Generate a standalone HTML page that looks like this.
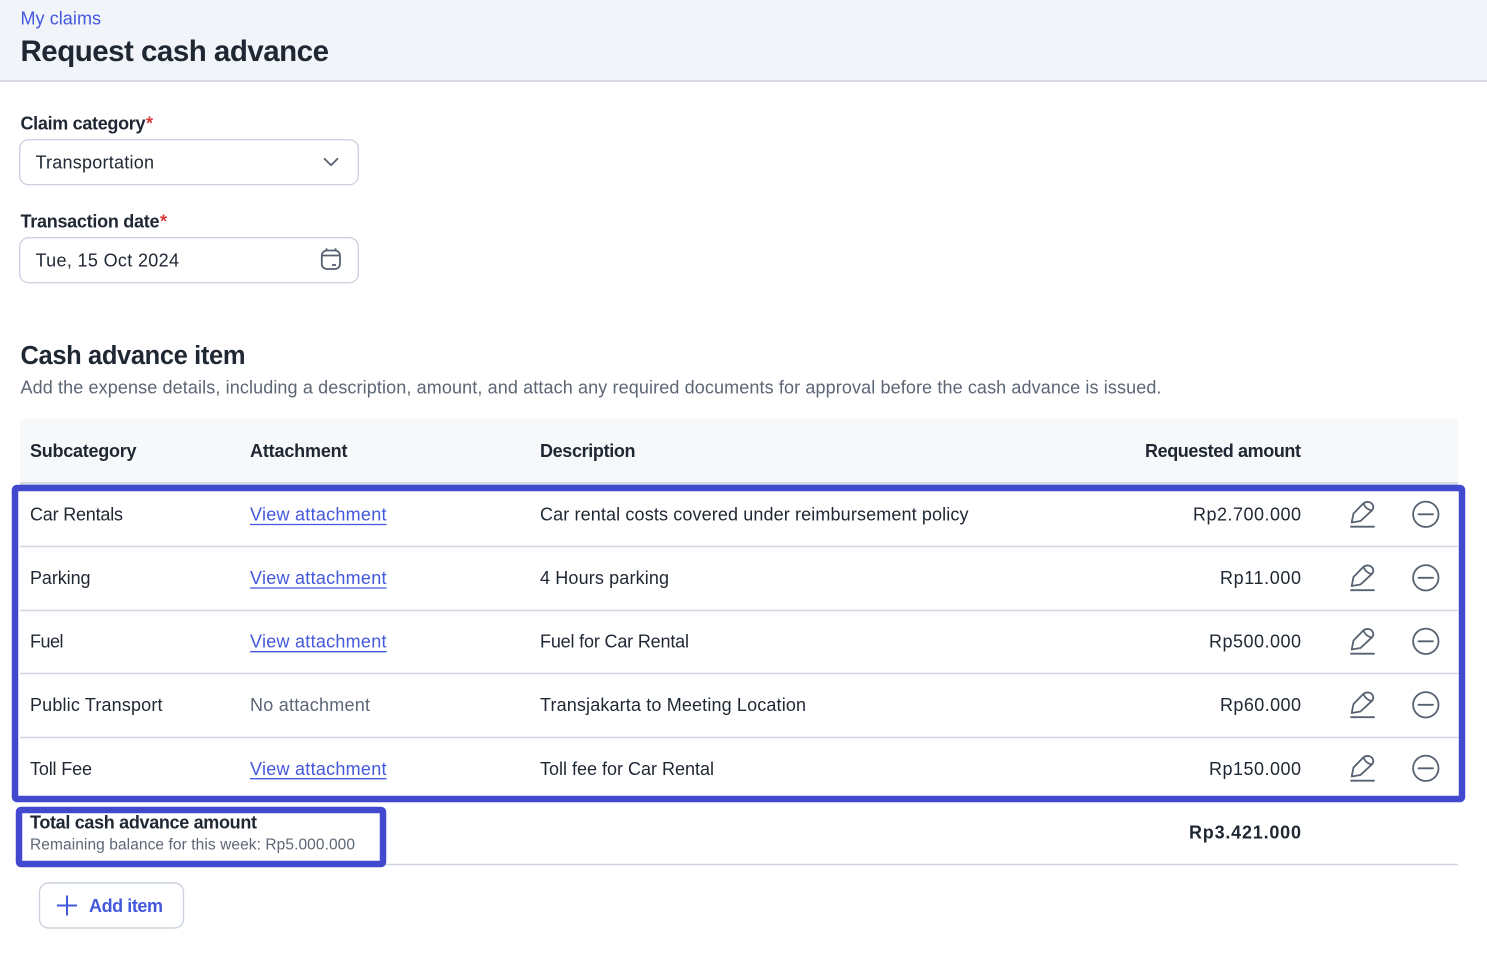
<!DOCTYPE html>
<html lang="en"><head><meta charset="utf-8"><title>Request cash advance</title>
<style>
html,body{margin:0;padding:0;background:#fff;width:1487px;height:956px;overflow:hidden}
svg{display:block}
text{font-family:"Liberation Sans",sans-serif;fill:#1f2733;font-size:18px}
.b{font-weight:700}
.l{fill:#4358dd}
.g{fill:#5c6675}
.ic{fill:none;stroke:#566171;stroke-width:1.800;stroke-linecap:round;stroke-linejoin:round}
</style></head><body>
<svg width="1487" height="956" viewBox="0 0 1487 956" xmlns="http://www.w3.org/2000/svg">
<defs>
<g id="pen" class="ic"><path d="M1351.700 522.500 L1353.500 513.500 L1363 503.800 Q1366 501.200 1369.500 502.200 Q1373 503.500 1373.300 507 Q1373.300 509 1372 510.300 L1360.500 521 Z"/><path d="M1363.800 504.500 Q1366.500 509.500 1371.800 510.500"/><path d="M1351 526.700 H1374"/></g>
<g id="minus" class="ic"><circle cx="1425.800" cy="514.300" r="12.700"/><path d="M1418.500 514.300 H1433"/></g>
</defs>
<rect width="1487" height="81" fill="#f1f4f9"/><rect y="80" width="1487" height="2" fill="#d6dbe3"/>
<text x="20.500" y="24.300" class="l" textLength="80.500">My claims</text>
<text x="20.500" y="61" class="b" style="font-size:29.500px" textLength="308.500">Request cash advance</text>

<text x="20.500" y="129.700" class="b" textLength="125">Claim category</text><text x="146" y="129.700" class="b" style="fill:#d93a3a">*</text>
<rect x="19.700" y="139.700" width="338.600" height="45" rx="9" fill="#fff" stroke="#ccd3df" stroke-width="1.400"/>
<text x="35.500" y="168.300" textLength="118.500">Transportation</text>
<path class="ic" d="M324.500 158.800 L331 165.300 L337.500 158.800"/>

<text x="20.500" y="227.500" class="b" textLength="139">Transaction date</text><text x="160" y="227.500" class="b" style="fill:#d93a3a">*</text>
<rect x="19.700" y="237.700" width="338.600" height="45" rx="9" fill="#fff" stroke="#ccd3df" stroke-width="1.400"/>
<text x="35.500" y="266.300" textLength="143.500">Tue, 15 Oct 2024</text>
<rect x="321.800" y="250.500" width="18.200" height="18.500" rx="5" class="ic"/><path class="ic" d="M326.500 249 V250.500 M335.500 249 V250.500 M323 255.500 H339"/><path d="M332 265 H336" stroke="#566171" stroke-width="1.800"/>

<text x="20.500" y="363.800" class="b" style="font-size:25.500px" textLength="225">Cash advance item</text>
<text x="20.500" y="393.500" class="g" textLength="1141">Add the expense details, including a description, amount, and attach any required documents for approval before the cash advance is issued.</text>

<rect x="20" y="419" width="1438" height="64" fill="#f7f8fa"/><rect x="20" y="482" width="1438" height="3" fill="#d6dbe3"/>
<text x="30" y="457" class="b" textLength="106.500">Subcategory</text>
<text x="250" y="457" class="b" textLength="97.500">Attachment</text>
<text x="540" y="457" class="b" textLength="95.500">Description</text>
<text x="1145" y="457" class="b" textLength="156">Requested amount</text>

<path d="M20 546.500H1458M20 610.500H1458M20 673.500H1458M20 737.500H1458M20 864.500H1458" stroke="#cfd6e1" stroke-width="1.500"/>

<text x="30" y="520.500" textLength="93">Car Rentals</text>
<text x="250" y="520.500" class="l" textLength="136.500">View attachment</text>
<text x="540" y="520.500" textLength="428.500">Car rental costs covered under reimbursement policy</text>
<text x="1193" y="520.500" textLength="108">Rp2.700.000</text>

<text x="30" y="584" textLength="60.500">Parking</text>
<text x="250" y="584" class="l" textLength="136.500">View attachment</text>
<text x="540" y="584" textLength="129">4 Hours parking</text>
<text x="1220" y="584" textLength="81">Rp11.000</text>

<text x="30" y="647.700" textLength="33.500">Fuel</text>
<text x="250" y="647.700" class="l" textLength="136.500">View attachment</text>
<text x="540" y="647.700" textLength="149">Fuel for Car Rental</text>
<text x="1209" y="647.700" textLength="92">Rp500.000</text>

<text x="30" y="711.200" textLength="132.500">Public Transport</text>
<text x="250" y="711.200" class="g" textLength="120">No attachment</text>
<text x="540" y="711.200" textLength="266">Transjakarta to Meeting Location</text>
<text x="1220" y="711.200" textLength="81">Rp60.000</text>

<text x="30" y="775" textLength="62">Toll Fee</text>
<text x="250" y="775" class="l" textLength="136.500">View attachment</text>
<text x="540" y="775" textLength="174">Toll fee for Car Rental</text>
<text x="1209" y="775" textLength="92">Rp150.000</text>

<path d="M250 524.500H386.500M250 588H386.500M250 651.700H386.500M250 778.700H386.500" stroke="#4358dd" stroke-width="1.300"/>

<use href="#pen"/><use href="#minus"/>
<use href="#pen" y="63.500"/><use href="#minus" y="63.500"/>
<use href="#pen" y="127"/><use href="#minus" y="127"/>
<use href="#pen" y="190.500"/><use href="#minus" y="190.500"/>
<use href="#pen" y="254"/><use href="#minus" y="254"/>

<text x="30" y="828.700" class="b" textLength="227">Total cash advance amount</text>
<text x="30" y="849.500" class="g" style="font-size:15.500px" textLength="325">Remaining balance for this week: Rp5.000.000</text>
<text x="1189" y="838.300" class="b" textLength="112">Rp3.421.000</text>

<rect x="15" y="488" width="1447" height="311" rx="2" fill="none" stroke="#4249cf" stroke-width="6.500"/>
<rect x="19" y="810" width="364" height="54" rx="2" fill="none" stroke="#4249cf" stroke-width="6.500"/>

<rect x="39.500" y="883" width="144" height="45" rx="9" fill="#fff" stroke="#ccd3df" stroke-width="1.400"/>
<path d="M57 905.500H77M67 895.500V915.500" stroke="#4358dd" stroke-width="2" fill="none"/>
<text x="89" y="912" class="b l" textLength="74">Add item</text>
</svg>
</body></html>
